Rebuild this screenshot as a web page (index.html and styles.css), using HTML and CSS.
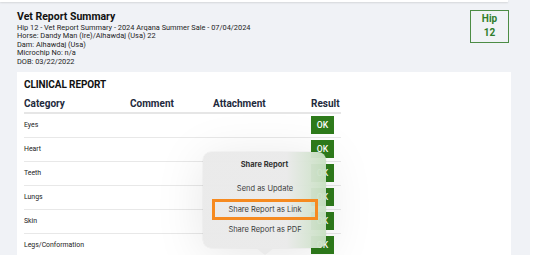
FILE: index.html
```html
<!DOCTYPE html>
<html lang="en">
<head>
    <meta charset="UTF-8">
    <title>Vet Report Summary</title>
    <link rel="stylesheet" href="styles.css">
</head>
<body>
    <div id="page">
        <div class="topbar"></div>
        <div class="head">
            <div class="summary">
                <h1>Vet Report Summary</h1>
                <p>Hip 12 - Vet Report Summary - 2024 Arqana Summer Sale - 07/04/2024</p>
                <p>Horse: Dandy Man (Ire)/Alhawdaj (Usa) 22</p>
                <p>Dam: Alhawdaj (Usa)</p>
                <p>Microchip No: n/a</p>
                <p>DOB: 03/22/2022</p>
            </div>
            <div class="hip">Hip<br>12</div>
        </div>
        <div class="card">
            <h2>CLINICAL REPORT</h2>
            <table class="report">
                <tr>
                    <th class="c-cat">Category</th>
                    <th class="c-com">Comment</th>
                    <th class="c-att">Attachment</th>
                    <th class="c-res">Result</th>
                </tr>
                <tr><td>Eyes</td><td></td><td></td><td><span class="ok">OK</span></td></tr>
                <tr><td>Heart</td><td></td><td></td><td><span class="ok">OK</span></td></tr>
                <tr><td>Teeth</td><td></td><td></td><td><span class="ok">OK</span></td></tr>
                <tr><td>Lungs</td><td></td><td></td><td><span class="ok">OK</span></td></tr>
                <tr><td>Skin</td><td></td><td></td><td><span class="ok">OK</span></td></tr>
                <tr><td>Legs/Conformation</td><td></td><td></td><td><span class="ok">OK</span></td></tr>
            </table>
        </div>

        <div class="share">
            <div class="share-title">Share Report</div>
            <div class="share-item">Send as Update</div>
            <div class="share-item picked">Share Report as Link</div>
            <div class="share-item">Share Report as PDF</div>
        </div>
    </div>
</body>
</html>
```
FILE: styles.css
```css
*{
    margin: 0;
    padding: 0;
    box-sizing: border-box;
}
body{
    background: #fff;
    font-family: Roboto, "Liberation Sans", sans-serif;
    color: #1c1c1c;
}
#page{
    width: 530px;
    height: 255px;
    background: #f0f2f6;
    position: relative;
    overflow: hidden;
}
.topbar{
    width: 508px;
    height: 2px;
    background: #fff;
    box-shadow: 0 1px 2px rgba(0,0,0,0.12);
}
.head{
    display: flex;
    justify-content: space-between;
    align-items: flex-start;
    padding: 8px 21px 0 17px;
    height: 70px;
}
.summary h1{
    font-size: 10.5px;
    font-weight: 700;
    line-height: 13px;
    color: #111;
    margin-bottom: 1px;
}
.summary p{
    font-size: 7.4px;
    line-height: 8.4px;
    color: #1e1e1e;
}
.hip{
    width: 39px;
    height: 33px;
    border: 1.5px solid #4c8c45;
    color: #2f7d2b;
    font-weight: 700;
    font-size: 10px;
    line-height: 14px;
    text-align: center;
    padding-top: 1px;
}
.card{
    margin-left: 17px;
    width: 494px;
    height: 200px;
    background: #fff;
    padding: 6px 7px 0 7px;
}
.card h2{
    font-size: 10px;
    font-weight: 700;
    color: #111;
    line-height: 13px;
    letter-spacing: -0.1px;
}
.report{
    margin-top: 5px;
    border-collapse: collapse;
    width: 317px;
}
.report th{
    font-size: 10px;
    font-weight: 700;
    color: #1e2a3c;
    text-align: left;
    height: 17px;
    padding-top: 2px;
    vertical-align: top;
    border-bottom: 2px solid #e6e6e6;
}
.report .c-cat{ width: 106px; }
.report .c-com{ width: 83px; }
.report .c-att{ width: 98px; }
.report td{
    font-size: 6.9px;
    color: #222;
    height: 24px;
    border-bottom: 1px solid #e8e8e8;
    vertical-align: middle;
}
.ok{
    display: block;
    width: 23px;
    height: 18px;
    background: #2e7b1b;
    color: #fff;
    font-size: 8.6px;
    font-weight: 500;
    line-height: 18px;
    text-align: center;
}

/* share popover */
.share{
    position: absolute;
    left: 203px;
    top: 152px;
    width: 123px;
    height: 96px;
    border-radius: 8px;
    background: linear-gradient(to right, rgba(234,234,234,0.97) 0%, rgba(234,234,234,0.97) 68%, rgba(200,224,194,0.96) 100%);
    box-shadow: 0 6px 50px rgba(0,0,0,0.10), 0 0 0 0.5px rgba(0,0,0,0.05);
    text-align: center;
    font-family: Inter, Roboto, sans-serif;
    font-size: 7.5px;
    color: #3c3c3c;
    padding-top: 6px;
}
.share::after{
    content: "";
    position: absolute;
    left: 53px;
    bottom: -7px;
    border-left: 9px solid transparent;
    border-right: 9px solid transparent;
    border-top: 7px solid #eaeaea;
}
.share-title{
    font-weight: 700;
    color: #333;
    height: 14px;
    line-height: 14px;
    margin-bottom: 7px;
}
.share-item{
    height: 20px;
    line-height: 20px;
    margin: 0 8px 0 9px;
}
.share-item.picked{
    border: 3px solid #f68a20;
    line-height: 15px;
    height: 21px;
}
```
